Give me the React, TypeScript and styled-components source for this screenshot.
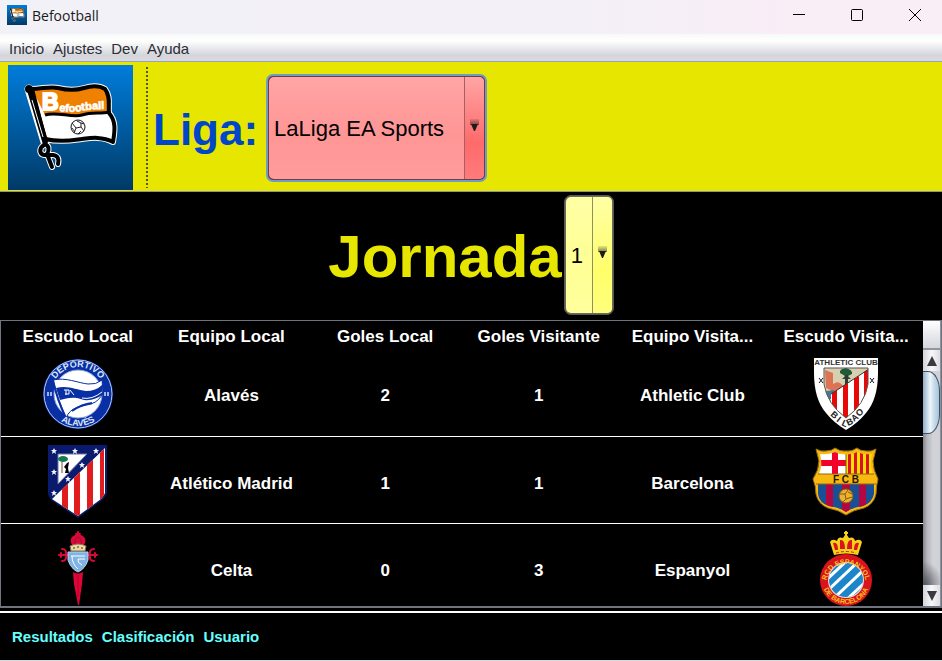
import React from "react";
import styled, { createGlobalStyle } from "styled-components";

const GlobalStyle = createGlobalStyle`
  *, *::before, *::after { box-sizing: border-box; }
  html, body { margin: 0; background: #000; }
  body { font-family: "Liberation Sans", Arial, sans-serif; }
  button, select { font-family: inherit; }
`;

const Window = styled.div`
  display: flex;
  flex-direction: column;
  height: 100vh;
  min-height: 480px;
  background: #000;
  border-bottom: 1px solid #d8d8dc;
`;

const TitleBar = styled.header`
  display: flex;
  align-items: center;
  gap: 5px;
  flex: none;
  height: 34px;
  padding: 0 0 4px 7px;
  background: linear-gradient(90deg, #f3f1f8, #f3f0f7 60%, #f9edf6 85%);
`;

const WindowTitle = styled.h1`
  flex: 1;
  margin: 0;
  padding-top: 2px;
  font: 400 14px/20px "Open Sans", "Noto Sans", sans-serif;
  color: #1a1a1a;
`;

const WindowControls = styled.div`
  display: flex;
  gap: 4px;
`;

const WindowButton = styled.button`
  display: grid;
  place-items: center;
  width: 54px;
  height: 30px;
  padding: 0;
  border: 0;
  background: transparent;
`;

const MenuBar = styled.nav`
  display: flex;
  align-items: center;
  gap: 9px;
  flex: none;
  height: 28px;
  padding: 2px 9px 0;
  background: linear-gradient(#f8f9fa, #ffffff 25%, #d4d6dc 78%, #d8dade);
  border-bottom: 1px solid #9da3b4;
`;

const MenuButton = styled.button`
  padding: 0;
  border: 0;
  background: transparent;
  font-size: 15px;
  line-height: 20px;
  color: #2c2c34;
`;

const Toolbar = styled.section`
  display: flex;
  align-items: center;
  flex: none;
  height: 130px;
  padding: 3px 8px 1px;
  background: #e6e600;
  border-bottom: 1px solid #8e93a0;
`;

const Separator = styled.div`
  align-self: stretch;
  width: 2px;
  margin: 2px 5px 2px 13px;
  background: repeating-linear-gradient(#55551a 0 2px, transparent 2px 4px);
`;

const Label = styled.label<{ $size: number; $color: string }>`
  padding-top: 4px;
  font-weight: 700;
  font-size: ${(p) => p.$size}px;
  line-height: ${(p) => p.$size}px;
  color: ${(p) => p.$color};
`;

const ComboFrame = styled.div<{ $tone: "red" | "yellow" }>`
  display: inline-grid;
  grid-template-columns: auto;
  height: ${(p) => (p.$tone === "red" ? 108 : 120)}px;
  margin-left: ${(p) => (p.$tone === "red" ? 8 : 2)}px;
  border-radius: 7px;
  border: 2px solid ${(p) => (p.$tone === "red" ? "#6d9cc4" : "#55575e")};
  border-width: ${(p) => (p.$tone === "red" ? 2 : 1)}px;
  background: ${(p) => (p.$tone === "red" ? "#733b45" : "#6d6d50")};
  overflow: hidden;
`;

const ComboSelect = styled.select<{ $tone: "red" | "yellow" }>`
  grid-area: 1 / 1;
  appearance: none;
  margin: 1px;
  padding: 2px ${(p) => (p.$tone === "red" ? "38px 0 5px" : "28px 0 5px")};
  border: 0;
  border-radius: 5px;
  background: ${(p) =>
    p.$tone === "red"
      ? "linear-gradient(#ffa5a5, #ff9696 55%, #ff9c9c)"
      : "linear-gradient(#ffffa5, #ffff96 55%, #ffff9c)"};
  font-size: 22px;
  color: #000;
`;

const ComboArrow = styled.span<{ $tone: "red" | "yellow" }>`
  grid-area: 1 / 1;
  justify-self: end;
  display: grid;
  place-items: center;
  width: 20px;
  margin: 1px 1px 1px 0;
  padding-bottom: 5px;
  border-left: 1px solid ${(p) => (p.$tone === "red" ? "#a55f66" : "#8f8f60")};
  border-radius: 0 5px 5px 0;
  background: ${(p) =>
    p.$tone === "red"
      ? "linear-gradient(#ffa5a5, #ff6a6a 65%, #ff7c7c)"
      : "linear-gradient(#ffffa5, #ffff6a 65%, #ffff7c)"};
  pointer-events: none;
`;

const Matchday = styled.section`
  display: flex;
  align-items: center;
  justify-content: center;
  flex: none;
  height: 128px;
  padding-bottom: 3px;
`;

const ResultsPane = styled.main`
  display: grid;
  grid-template-columns: 1fr 18px;
  flex: 1;
  min-height: 0;
  border: 1px solid #70747e;
  border-bottom-width: 2px;
`;

const TableClip = styled.div`
  min-height: 0;
  overflow: hidden;
`;

const Table = styled.table`
  width: 100%;
  table-layout: fixed;
  border-collapse: collapse;
  font-size: 17px;
  line-height: 20px;
  font-weight: 700;
  color: #fff;
  text-align: center;
`;

const HeadCell = styled.th`
  height: 28px;
  padding: 3px 0 0;
  white-space: nowrap;
`;

const TextCell = styled.td`
  height: 87px;
  padding: 8px 0 0;
  border-bottom: 1px solid #fff;
`;

const CrestCell = styled.td`
  height: 87px;
  padding: 4px 0 0;
  border-bottom: 1px solid #fff;

  svg { display: block; margin: 0 auto; }
`;

const ScrollColumn = styled.div`
  display: flex;
  flex-direction: column;
  min-height: 0;
  border-right: 1px solid #8d919c;
`;

const ScrollCorner = styled.div`
  flex: none;
  height: 29px;
  background: linear-gradient(#fff, #e9eaee 50%, #d5d7dd);
  border-bottom: 2px solid #9296a0;
`;

const ScrollButton = styled.button`
  display: grid;
  place-items: center;
  flex: none;
  height: 21px;
  padding: 0;
  border: 0;
  background: linear-gradient(90deg, #d2d4da, #f8f8fa 50%, #dcdde2);
`;

const ScrollTrack = styled.div`
  flex: 1;
  min-height: 0;
  overflow: hidden;
  background:
    radial-gradient(ellipse 20px 24px at 0 100%, #505259, transparent),
    linear-gradient(90deg, #85868c, #b6b8be 25%, #d2d3d9 60%, #d0d1d7);
`;

const ScrollThumb = styled.div`
  height: 63px;
  border: 1px solid #3c5064;
  border-left: 0;
  border-radius: 0 12px 12px 0 / 0 20px 20px 0;
  background: linear-gradient(90deg, #8fafca, #eff6fb 45%, #c6dbea 70%, #a9c4d8);
`;

const Footer = styled.nav`
  display: flex;
  align-items: center;
  gap: 9px;
  flex: none;
  height: 49px;
  margin-top: 3px;
  padding: 1px 12px 0;
  border-top: 2px solid #fff;
`;

const FooterLink = styled.a`
  font-size: 15px;
  line-height: 20px;
  font-weight: 700;
  color: #66ffff;
  text-decoration: none;
`;

function Logo({ size }: { size: number }) {
  const cloth =
    "M24 24 C34 24 42 21 50 23 S66 26 76 23 S92 21 97 24 C103 32 100 40 101 48 C108 56 107 65 105 77 C94 71 82 73 74 74 S54 78 37 74 Z";
  const ropes =
    "M38 74 L36 80 C31 83 31 89 36 90 L45 90 Q52 91 50 99 M37 79 Q43 82 39 89 L44 102";
  return (
    <svg width={size} height={size} viewBox="0 0 125 125" role="img" aria-label="Befootball">
      <defs>
        <linearGradient id="sky" x1="0" y1="0" x2="0" y2="1">
          <stop offset="0" stopColor="#007ddb" />
          <stop offset="1" stopColor="#003a66" />
        </linearGradient>
        <path id="wordLine" d="M51 46 Q62 48 73 46 T102 44" />
      </defs>
      <rect width="125" height="125" fill="url(#sky)" />
      <g fill="none" stroke="#fff" strokeLinejoin="round" strokeLinecap="round">
        <path d={cloth} strokeWidth="6" />
        <path d={ropes} strokeWidth="6" />
        <path d="M21 24 L37 77" strokeWidth="9" />
      </g>
      <path d={cloth} fill="#fff" />
      <path
        d="M24 24 C34 24 42 21 50 23 S66 26 76 23 S92 21 97 24 C103 32 100 40 101 47 C92 49 84 47 74 50 S48 46 37 50 Z"
        fill="#f08000"
      />
      <path d="M37 50 C48 46 64 53 74 50 S92 49 101 47" fill="none" stroke="#000" strokeWidth="3" />
      <path d={cloth} fill="none" stroke="#000" strokeWidth="4" strokeLinejoin="round" />
      <path d="M22 25 L37 76" stroke="#000" strokeWidth="6" strokeLinecap="round" />
      <path d="M24 35 L35 72" stroke="#fff" strokeWidth="1" />
      <circle cx="21" cy="24" r="4" fill="#000" />
      <path d={ropes} fill="none" stroke="#000" strokeWidth="4" strokeLinecap="round" />
      <circle cx="70" cy="62" r="7" fill="#fff" stroke="#111" strokeWidth="1" />
      <path
        d="M64 58 L68 63 L66 68 M68 63 L73 62 L76 66 M73 62 V58 L69 56 M73 58 L76 59 M64 63 L67 67 M70 69 L73 66"
        fill="none"
        stroke="#222"
        strokeWidth="1"
      />
      <text x="34" y="45" fontSize="23" fontWeight="700" fill="#fff" stroke="#fff" strokeWidth="2">
        B
      </text>
      <text fontSize="11" fontWeight="700" fill="#fff" stroke="#fff" strokeWidth="0.6">
        <textPath href="#wordLine">efootball</textPath>
      </text>
    </svg>
  );
}

function ArrowIcon() {
  return (
    <svg width="9" height="13" viewBox="0 0 9 13" aria-hidden="true">
      <defs>
        <linearGradient id="arrowFade" x1="0" y1="0" x2="0" y2="1">
          <stop offset="0" stopColor="#222" stopOpacity="0.1" />
          <stop offset="1" stopColor="#222" stopOpacity="0.6" />
        </linearGradient>
      </defs>
      <rect width="9" height="6" fill="url(#arrowFade)" />
      <path d="M1 5 H8 L5 12 H4 Z" fill="#1c1c1c" />
    </svg>
  );
}

function Alaves() {
  return (
    <svg width="72" height="72" viewBox="0 0 72 72" role="img" aria-label="Escudo Alavés">
      <defs>
        <path id="alavesTop" d="M9 36 A27 27 0 0 1 63 36" />
        <path id="alavesBottom" d="M4 36 A32 32 0 0 0 68 36" />
      </defs>
      <circle cx="36" cy="36" r="35" fill="#0830a4" />
      <circle cx="36" cy="36" r="34" fill="none" stroke="#b4c2ec" strokeWidth="1" />
      <circle cx="36" cy="36" r="24" fill="#fff" stroke="#8fa3de" strokeWidth="1" />
      <path
        d="M11 22 C24 19 36 25 46 26 Q54 27 60 22 L61 34 Q58 43 49 46 L36 49 Q27 52 24 60 Q15 40 11 22 Z"
        fill="#fff"
        stroke="#0830a4"
        strokeWidth="1"
      />
      <path d="M14 30 C26 27 34 32 44 33 Q54 33 60 27 L61 36 Q53 43 42 42 C32 38 25 40 18 42 Z" fill="#0830a4" />
      <path d="M40 40 Q50 42 60 34" stroke="#fff" strokeWidth="1" fill="none" />
      <path d="M22 32 H27 V36 H23 M28 32 L32 37 M24 32 V37" stroke="#fff" strokeWidth="1" fill="none" />
      <path d="M30 53 Q40 46 50 45 M11 22 Q15 42 24 60" stroke="#0830a4" strokeWidth="2" fill="none" />
      <g fill="#dfe6fa" fontSize="9" fontWeight="700" textAnchor="middle">
        <text>
          <textPath href="#alavesTop" startOffset="50%">DEPORTIVO</textPath>
        </text>
        <text>
          <textPath href="#alavesBottom" startOffset="50%">ALAVÉS</textPath>
        </text>
      </g>
      <g fill="#9fb2e6">
        <rect x="5" y="34" width="2" height="4" />
        <rect x="8" y="34" width="2" height="4" />
        <rect x="62" y="34" width="2" height="4" />
        <rect x="65" y="34" width="2" height="4" />
      </g>
    </svg>
  );
}

function Atletico() {
  const stars = [[6, 6], [27, 6], [48, 6], [6, 27], [6, 48], [34, 20], [20, 34]];
  return (
    <svg width="60" height="74" viewBox="0 0 60 74" role="img" aria-label="Escudo Atlético Madrid">
      <path d="M0 0 H59 V48 Q57 54 50 58 L30 73 L9 59 Q0 54 0 48 Z" fill="#0a1a6c" />
      <clipPath id="atmStripes">
        <path d="M57 3 V48 Q55 53 49 57 L30 71 L10 58 L4 54 Z" />
      </clipPath>
      <g clipPath="url(#atmStripes)">
        <rect width="60" height="74" fill="#fff" />
        <path d="M14 0 H20 V74 H14Z M26 0 H32 V74 H26Z M39 0 H45 V74 H39Z M52 0 H56 V74 H52Z" fill="#e01c1c" />
      </g>
      <path d="M10 9 H39 L10 39 Z" fill="#fff" stroke="#6a76a8" strokeWidth="1" />
      <ellipse cx="15" cy="14" rx="5" ry="3" fill="#147a50" />
      <path d="M14 17 V28" stroke="#7c5430" strokeWidth="1" />
      <path d="M19 18 L21 17 L20 23 L21 28 H17 L18 24 L16 22 Z" fill="#000" />
      {stars.map(([x, y]) => (
        <path
          key={`${x}-${y}`}
          transform={`translate(${x} ${y})`}
          d="M0 -3 L1 -1 L3 -1 L1.400 .6 L2 3 L0 1.500 L-2 3 L-1.400 .6 L-3 -1 L-1 -1 Z"
          fill="#f2f4ff"
        />
      ))}
    </svg>
  );
}

function Celta() {
  return (
    <svg width="42" height="75" viewBox="0 0 42 75" role="img" aria-label="Escudo Celta">
      <g fill="none" stroke="#dc0838" strokeWidth="2" strokeLinecap="round">
        <path d="M2 24 H12 M30 24 H40 M5 18 Q10 18 9 24 Q10 30 5 30 M37 18 Q32 18 33 24 Q32 30 37 30" />
        <path d="M4 22 V26 M38 22 V26 M21 1 V6 M19 3 H23" />
      </g>
      <path d="M15 14 Q11 7 18 4 H24 Q31 7 27 14 Z" fill="#dc0838" />
      <path d="M18 13 Q17 8 21 6 Q25 8 24 13" fill="none" stroke="#8e1530" strokeWidth="1" />
      <path d="M13 15 Q21 11 29 15 L28 20 H14 Z" fill="#ecd8a0" stroke="#8a7350" strokeWidth="1" />
      <path d="M16 17 H18 M20 16 H22 M24 17 H26" stroke="#4a3420" strokeWidth="1" />
      <path d="M11 21 H31 V29 Q28 38 21 41 Q14 38 11 29 Z" fill="#80b4e4" stroke="#b5d2ec" strokeWidth="1" />
      <path d="M14 25 H28 M15 25 Q15 33 21 38 M28 28 H21 Q20 32 25 34" fill="none" stroke="#fff" strokeWidth="1" />
      <path d="M16 41 Q21 44 26 41 L25 53 L22 74 H21 L17 53 Z" fill="#e00438" />
      <path d="M21 44 V66" stroke="#b3042d" strokeWidth="1" />
    </svg>
  );
}

function Athletic() {
  return (
    <svg width="64" height="74" viewBox="0 0 64 74" role="img" aria-label="Escudo Athletic Club">
      <defs>
        <clipPath id="athInner">
          <path d="M10 11 H54 V27 Q51 47 32 61 Q13 47 10 27 Z" />
        </clipPath>
      </defs>
      <path d="M0 1 H64 V16 Q64 42 52 56 Q44 66 32 73 Q20 66 12 56 Q0 42 0 16 Z" fill="#fff" />
      <g clipPath="url(#athInner)">
        <rect width="64" height="74" fill="#d8ceb0" />
        <path d="M11 13 L19 16 V34 L12 31 Z M18 28 Q24 22 29 29 L24 38 H17 Z" fill="#dc7354" />
        <path d="M12 34 L20 33 L19 42 H12 Z" fill="#4c7590" />
        <path d="M26 16 Q25 12 32 11 Q39 13 38 17 L34 19 L37 22 H28 L31 19 Z" fill="#205b38" />
        <path d="M31 18 H34 V29 H31 Z" fill="#303a34" />
        <path d="M55 12 L17 37 V74 H64 V12 Z" fill="#fff" />
        <path d="M18 36 L23 33 V74 H18Z M29 29 L34 26 V74 H29Z M40 22 L45 19 V74 H40Z M50 15 L55 12 V74 H50Z" fill="#e80808" />
        <path d="M55 12 L17 37" stroke="#333" strokeWidth="1" />
      </g>
      <path d="M10 11 H54 V27 Q51 47 32 61 Q13 47 10 27 Z" fill="none" stroke="#555" strokeWidth="1" />
      <path d="M5 21 L9 26 M9 21 L5 26 M56 21 L60 26 M60 21 L56 26" stroke="#111" strokeWidth="1" />
      <text x="32" y="8" textAnchor="middle" fontSize="8" fill="#333">
        ATHLETIC CLUB
      </text>
      <text
        x="16 22 27 34 40 45"
        y="58 64 68 69 65 60"
        rotate="42 38 25 -25 -38 -42"
        fontSize="9"
        fontWeight="700"
        fill="#222"
      >
        BILBAO
      </text>
    </svg>
  );
}

function Barcelona() {
  const outline =
    "M4 3 Q9 6 14 5 Q20 5 23 2 Q28 6 34 5 Q40 6 45 2 Q48 5 54 5 Q59 6 64 3 L61 15 Q61 24 66 33 Q64 40 64 48 Q62 58 52 62 Q41 64 34 69 Q27 64 16 62 Q6 58 4 48 Q4 40 1 33 Q7 24 7 15 Z";
  return (
    <svg width="68" height="72" viewBox="0 0 68 72" role="img" aria-label="Escudo Barcelona">
      <defs>
        <clipPath id="fcbTop">
          <path d="M8 8 Q16 9 23 6 Q28 9 34 8 Q40 9 45 6 Q52 9 60 8 Q57 19 61 28 H7 Q11 19 8 8 Z" />
        </clipPath>
        <clipPath id="fcbBottom">
          <path d="M6 38 H62 V48 Q60 57 51 60 Q41 61 34 66 Q27 61 17 60 Q7 57 6 48 Z" />
        </clipPath>
      </defs>
      <path d={outline} fill="#f9b810" stroke="#9a7318" strokeWidth="1" />
      <g clipPath="url(#fcbTop)">
        <rect width="34" height="30" fill="#fff" />
        <path d="M20 0 H26 V30 H20 Z M0 14 H34 V20 H0 Z" fill="#f1002c" />
        <rect x="34" width="34" height="30" fill="#ffe000" />
        <path d="M36 0 H39 V30 H36Z M42 0 H45 V30 H42Z M48 0 H51 V30 H48Z M54 0 H57 V30 H54Z" fill="#dc1024" />
        <path d="M34 5 V28" stroke="#7a5a18" strokeWidth="1" />
      </g>
      <g clipPath="url(#fcbBottom)">
        <rect width="68" height="72" fill="#184f95" />
        <path d="M14 0 H21 V72 H14Z M30 0 H38 V72 H30Z M47 0 H54 V72 H47Z" fill="#b40640" />
      </g>
      <path d="M6 28 H62 M4 38 H64" stroke="#8c6818" strokeWidth="1" />
      <text x="34" y="37" textAnchor="middle" fontSize="10" fontWeight="700" fill="#1c1605">
        F C B
      </text>
      <circle cx="34" cy="50" r="7" fill="#edb12b" stroke="#7e5b18" strokeWidth="1" />
      <path d="M28 48 L33 48 L36 44 M33 48 L34 53 L31 56 M34 53 L40 51 M36 46 L40 48" fill="none" stroke="#7e5b18" strokeWidth="1" />
    </svg>
  );
}

function Espanyol() {
  return (
    <svg width="54" height="76" viewBox="0 0 54 76" role="img" aria-label="Escudo Espanyol">
      <defs>
        <clipPath id="rcdeInner">
          <circle cx="27" cy="49" r="17" />
        </clipPath>
        <path id="rcdeTop" d="M7 53 A20 20 0 1 1 47 53" />
        <path id="rcdeBottom" d="M3 49 A24 24 0 0 0 51 49" />
      </defs>
      <circle cx="27" cy="49" r="26" fill="#d9141c" />
      <circle cx="27" cy="49" r="18" fill="#f7dada" />
      <g clipPath="url(#rcdeInner)">
        <rect y="30" width="54" height="40" fill="#1c86c8" />
        <path d="M4 52 L36 22 M6 62 L42 28 M12 70 L50 34 M22 74 L56 42" stroke="#fff" strokeWidth="3" />
      </g>
      <g fill="#f6c51c" fontSize="7" fontWeight="700" textAnchor="middle">
        <text>
          <textPath href="#rcdeTop" startOffset="50%">RCD ESPANYOL</textPath>
        </text>
        <text>
          <textPath href="#rcdeBottom" startOffset="50%">DE BARCELONA</textPath>
        </text>
      </g>
      <path
        d="M15 24 L11 11 Q13 7 18 10 Q19 5 24 7 L26 4 H28 L30 7 Q35 5 36 10 Q41 7 43 11 L39 24 Q27 21 15 24 Z"
        fill="#f8d018"
      />
      <path d="M27 0 V5 M25 2 H29" stroke="#f8d018" strokeWidth="2" />
      <path
        d="M14 12 Q19 10 19 19 H16 Z M21 9 Q26 8 26 18 H21 Z M28 18 Q28 8 33 9 V18 Z M40 12 Q35 10 35 19 H38 Z"
        fill="#d9141c"
      />
      <path d="M17 22 Q27 19 37 22" stroke="#c41e18" strokeWidth="1" fill="none" strokeDasharray="3 2" />
    </svg>
  );
}

const columns = [
  "Escudo Local",
  "Equipo Local",
  "Goles Local",
  "Goles Visitante",
  "Equipo Visita...",
  "Escudo Visita...",
];

const matches = [
  { home: "Alavés", away: "Athletic Club", score: [2, 1], HomeCrest: Alaves, AwayCrest: Athletic },
  { home: "Atlético Madrid", away: "Barcelona", score: [1, 1], HomeCrest: Atletico, AwayCrest: Barcelona },
  { home: "Celta", away: "Espanyol", score: [0, 3], HomeCrest: Celta, AwayCrest: Espanyol },
];

function Combo({ id, tone, value }: { id: string; tone: "red" | "yellow"; value: string }) {
  return (
    <ComboFrame $tone={tone}>
      <ComboSelect id={id} $tone={tone} defaultValue={value}>
        <option>{value}</option>
      </ComboSelect>
      <ComboArrow $tone={tone}>
        <ArrowIcon />
      </ComboArrow>
    </ComboFrame>
  );
}

export default function App() {
  return (
    <>
      <GlobalStyle />
      <Window>
        <TitleBar>
          <Logo size={20} />
          <WindowTitle>Befootball</WindowTitle>
          <WindowControls>
            <WindowButton aria-label="Minimizar">
              <svg width="12" height="12" viewBox="0 0 12 12">
                <path d="M0 5.500 H12" stroke="#000" />
              </svg>
            </WindowButton>
            <WindowButton aria-label="Maximizar">
              <svg width="12" height="12" viewBox="0 0 12 12">
                <rect x=".5" y=".5" width="11" height="11" rx="1" fill="none" stroke="#000" />
              </svg>
            </WindowButton>
            <WindowButton aria-label="Cerrar">
              <svg width="12" height="12" viewBox="0 0 12 12">
                <path d="M0 0 L12 12 M12 0 L0 12" stroke="#000" />
              </svg>
            </WindowButton>
          </WindowControls>
        </TitleBar>
        <MenuBar>
          {["Inicio", "Ajustes", "Dev", "Ayuda"].map((name) => (
            <MenuButton key={name}>{name}</MenuButton>
          ))}
        </MenuBar>
        <Toolbar>
          <Logo size={125} />
          <Separator />
          <Label htmlFor="league" $size={44} $color="#0046c8">
            Liga:
          </Label>
          <Combo id="league" tone="red" value="LaLiga EA Sports" />
        </Toolbar>
        <Matchday>
          <Label htmlFor="round" $size={60} $color="#e6e600">
            Jornada
          </Label>
          <Combo id="round" tone="yellow" value="1" />
        </Matchday>
        <ResultsPane>
          <TableClip>
            <Table>
              <thead>
                <tr>
                  {columns.map((name) => (
                    <HeadCell key={name} scope="col">
                      {name}
                    </HeadCell>
                  ))}
                </tr>
              </thead>
              <tbody>
                {matches.map(({ home, away, score, HomeCrest, AwayCrest }) => (
                  <tr key={home}>
                    <CrestCell>
                      <HomeCrest />
                    </CrestCell>
                    <TextCell>{home}</TextCell>
                    <TextCell>{score[0]}</TextCell>
                    <TextCell>{score[1]}</TextCell>
                    <TextCell>{away}</TextCell>
                    <CrestCell>
                      <AwayCrest />
                    </CrestCell>
                  </tr>
                ))}
              </tbody>
            </Table>
          </TableClip>
          <ScrollColumn>
            <ScrollCorner />
            <ScrollButton aria-label="Subir">
              <svg width="10" height="10" viewBox="0 0 10 10">
                <path d="M5 0 L10 10 H0 Z" fill="#3a3a40" />
              </svg>
            </ScrollButton>
            <ScrollTrack>
              <ScrollThumb />
            </ScrollTrack>
            <ScrollButton aria-label="Bajar">
              <svg width="10" height="10" viewBox="0 0 10 10">
                <path d="M0 0 H10 L5 10 Z" fill="#3a3a40" />
              </svg>
            </ScrollButton>
          </ScrollColumn>
        </ResultsPane>
        <Footer>
          {["Resultados", "Clasificación", "Usuario"].map((name) => (
            <FooterLink key={name} href="#">
              {name}
            </FooterLink>
          ))}
        </Footer>
      </Window>
    </>
  );
}
